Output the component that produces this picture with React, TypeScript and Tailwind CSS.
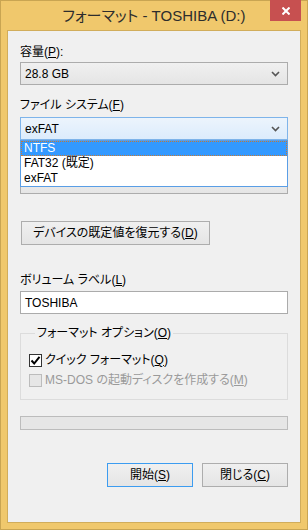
import React, { FC } from 'react';

// Windows 8 風のフォーマット ダイアログ

const Key: FC<{ k: string }> = ({ k }) => (
  <>
    (<u className="underline underline-offset-[1px] decoration-1">{k}</u>)
  </>
);

const Chevron: FC = () => (
  <svg width="9" height="6" viewBox="0 0 9 6" className="shrink-0">
    <path d="M1 1 L4.5 4.5 L8 1" fill="none" stroke="#555" strokeWidth="1.6" />
  </svg>
);

interface ComboProps {
  value: string;
  focused?: boolean;
  children?: React.ReactNode;
}
const Combo: FC<ComboProps> = ({ value, focused, children }) => (
  <div className="relative">
    <div
      className={`h-[23px] flex items-center justify-between pl-[4px] pr-[7px] border ${
        focused
          ? 'border-[#7eb4ea] bg-gradient-to-b from-[#ecf4fc] to-[#dcecfc]'
          : 'border-[#acacac] bg-gradient-to-b from-[#f0f0f0] to-[#e5e5e5]'
      }`}
    >
      <span className="leading-[16px]">{value}</span>
      <Chevron />
    </div>
    {children}
  </div>
);

const Label: FC<{ className?: string; children: React.ReactNode }> = ({ className = '', children }) => (
  <div className={`h-[16px] leading-[16px] ${className}`}>{children}</div>
);

const Button: FC<{ focused?: boolean; className?: string; children: React.ReactNode }> = ({ focused, className = '', children }) => (
  <button
    className={`h-[24px] border flex items-center justify-center bg-gradient-to-b from-[#f0f0f0] to-[#e5e5e5] ${
      focused ? 'border-[#3c9cf0]' : 'border-[#adadad]'
    } ${className}`}
  >
    {children}
  </button>
);

const App: FC = () => {
  const options = ['NTFS', 'FAT32 (既定)', 'exFAT'];

  return (
    <div className="w-[308px] h-[530px] relative flex flex-col bg-[#f0c86c] border border-[#c9a552] px-[6px] pb-[6px] text-[12px] text-black font-['Liberation_Sans','Noto_Sans_CJK_JP',sans-serif] [font-feature-settings:'palt']">
      {/* タイトルバー */}
      <div className="h-[29px] pt-[2px] flex items-center justify-center text-[15px] text-[#2d2d2d]">
        フォーマット - TOSHIBA (D:)
      </div>
      <div className="absolute -top-px left-[269px] w-[31px] h-[21px] bg-[#c75050] flex items-center justify-center">
        <svg width="8" height="8" viewBox="0 0 8 8">
          <path d="M0.5 0.5 L7.5 7.5 M7.5 0.5 L0.5 7.5" stroke="#fff" strokeWidth="2" />
        </svg>
      </div>

      {/* クライアント領域 */}
      <div className="flex-1 flex flex-col border border-[#d1ad5b] bg-[#f0f0f0] px-[12px]">
        <Label className="mt-[13px]">
          容量<Key k="P" />:
        </Label>
        <div className="mt-[2px]">
          <Combo value="28.8 GB" />
        </div>

        <Label className="mt-[12px]">
          ファイル システム<Key k="F" />
        </Label>
        <div className="mt-[4px] relative z-10">
          <Combo value="exFAT" focused>
            <div className="absolute left-0 right-0 top-full bg-white border border-[#5a9ee6]">
              {options.map((o, i) => (
                <div
                  key={o}
                  className={`h-[15px] leading-[13px] pl-[2px] ${
                    i === 0 ? 'bg-[#3399ff] text-white border border-dotted border-[#c97a32]' : 'pl-[3px] pt-px'
                  }`}
                >
                  {o}
                </div>
              ))}
            </div>
          </Combo>
        </div>

        <Label className="mt-[14px]">
          アロケーション ユニット サイズ<Key k="A" />
        </Label>
        <div className="mt-[1px]">
          <Combo value="4096 バイト" />
        </div>

        <Button className="mt-[27px] ml-px w-[189px]">
          デバイスの既定値を復元する<Key k="D" />
        </Button>

        <Label className="mt-[27px]">
          ボリューム ラベル<Key k="L" />
        </Label>
        <div className="mt-[3px] h-[23px] border border-[#ababab] bg-white flex items-center pl-[4px]">
          TOSHIBA
        </div>

        <fieldset className="mt-[11px] border border-[#dcdcdc] px-[8px] pb-[9px]">
          <legend className="ml-[6px] px-[2px] h-[16px] leading-[16px]">
            フォーマット オプション<Key k="O" />
          </legend>
          <div className="mt-[9px] h-[20px] flex items-center gap-[3px]">
            <div className="w-[13px] h-[13px] border border-[#333] bg-white flex items-center justify-center">
              <svg width="11" height="11" viewBox="0 0 11 11">
                <path d="M1.5 5.5 L4.2 8.5 L9.5 1.8" fill="none" stroke="#000" strokeWidth="2" />
              </svg>
            </div>
            <span>
              クイック フォーマット<Key k="Q" />
            </span>
          </div>
          <div className="h-[20px] flex items-center gap-[3px] text-[#9a9a9a]">
            <div className="w-[13px] h-[13px] border border-[#bcbcbc] bg-[#e6e6e6]" />
            <span>
              MS-DOS の起動ディスクを作成する<Key k="M" />
            </span>
          </div>
        </fieldset>

        <div className="mt-[16px] h-[14px] border border-[#bcbcbc] bg-[#e6e6e6]" />

        <div className="mt-[33px] flex justify-end gap-[9px]">
          <Button focused className="w-[86px]">
            開始<Key k="S" />
          </Button>
          <Button className="w-[86px]">
            閉じる<Key k="C" />
          </Button>
        </div>
      </div>
    </div>
  );
};

export default App;
